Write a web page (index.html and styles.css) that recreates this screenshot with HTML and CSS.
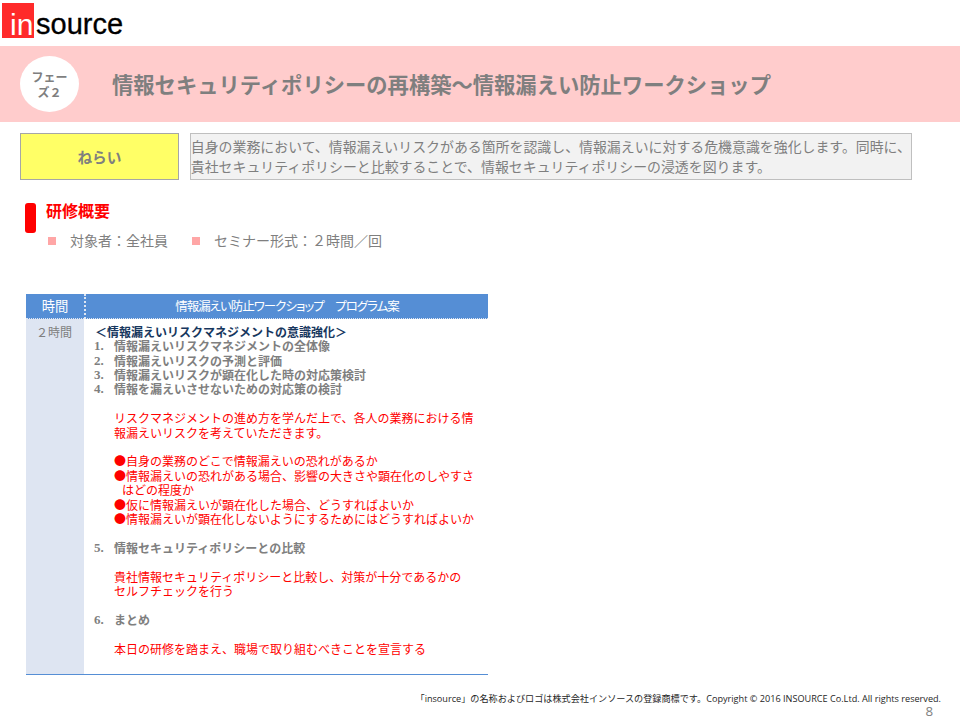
FILE: index.html
```html
<!DOCTYPE html>
<html lang="ja">
<head>
<meta charset="utf-8">
<title>情報セキュリティポリシーの再構築</title>
<link rel="stylesheet" href="styles.css">
</head>
<body>
<div class="page">
  <header class="logo-bar">
    <div class="logo"><span class="logo-in">in</span><span class="logo-source">source</span></div>
  </header>
  <section class="band">
    <div class="phase">フェー<br>ズ２</div>
    <h1 class="band-title">情報セキュリティポリシーの再構築～情報漏えい防止ワークショップ</h1>
  </section>
  <section class="aim">
    <div class="aim-label">ねらい</div>
    <p class="aim-text">自身の業務において、情報漏えいリスクがある箇所を認識し、情報漏えいに対する危機意識を強化します。同時に、<br>貴社セキュリティポリシーと比較することで、情報セキュリティポリシーの浸透を図ります。</p>
  </section>
  <section class="overview">
    <div class="overview-bar"></div>
    <div class="overview-body">
      <h2 class="overview-title">研修概要</h2>
      <div class="facts">
        <div class="fact"><span class="square"></span>対象者：全社員</div>
        <div class="fact"><span class="square"></span>セミナー形式：２時間／回</div>
      </div>
    </div>
  </section>
  <section class="program">
    <div class="head head-time">時間</div>
    <div class="head head-name">情報漏えい防止ワークショップ　プログラム案</div>
    <div class="cell-time">２時間</div>
    <div class="cell-body">
      <div class="lead">＜情報漏えいリスクマネジメントの意識強化＞</div>
      <div class="item"><span class="num">1.</span>情報漏えいリスクマネジメントの全体像</div>
      <div class="item"><span class="num">2.</span>情報漏えいリスクの予測と評価</div>
      <div class="item"><span class="num">3.</span>情報漏えいリスクが顕在化した時の対応策検討</div>
      <div class="item"><span class="num">4.</span>情報を漏えいさせないための対応策の検討</div>
      <p class="note gap">リスクマネジメントの進め方を学んだ上で、各人の業務における情報漏えいリスクを考えていただきます。</p>
      <ul class="points gap">
        <li>●自身の業務のどこで情報漏えいの恐れがあるか</li>
        <li>●情報漏えいの恐れがある場合、影響の大きさや顕在化のしやすさはどの程度か</li>
        <li>●仮に情報漏えいが顕在化した場合、どうすればよいか</li>
        <li>●情報漏えいが顕在化しないようにするためにはどうすればよいか</li>
      </ul>
      <div class="item gap"><span class="num">5.</span>情報セキュリティポリシーとの比較</div>
      <p class="note gap narrow">貴社情報セキュリティポリシーと比較し、対策が十分であるかのセルフチェックを行う</p>
      <div class="item gap"><span class="num">6.</span>まとめ</div>
      <p class="note gap">本日の研修を踏まえ、職場で取り組むべきことを宣言する</p>
    </div>
  </section>
  <footer class="foot">
    <div class="legal">「insource」の名称およびロゴは株式会社インソースの登録商標です。Copyright © 2016 INSOURCE Co.Ltd. All rights reserved.</div>
    <div class="page-no">8</div>
  </footer>
</div>
</body>
</html>
```
FILE: styles.css
```css
* { box-sizing: border-box; }
html, body { margin: 0; padding: 0; }
body { background: #fff; font-family: "Noto Sans CJK JP", "Noto Sans", sans-serif; color: #7f7f7f; }
h1, h2, p, ul { margin: 0; padding: 0; }
.page { width: 960px; height: 720px; overflow: hidden; }

.logo-bar { height: 46px; padding: 3px 0 0 2px; }
.logo { display: flex; align-items: flex-start; font-family: "Liberation Sans", sans-serif; font-size: 30px; line-height: 35px; }
.logo-in { width: 32px; height: 35px; padding: 4px 0 0 8px; background: #ff2a2a; color: #fff; }
.logo-source { padding-top: 4px; margin-left: 2px; color: #000; font-size: 29px; -webkit-text-stroke: 0.3px #000; }

.band { height: 76px; background: #ffcccc; display: flex; align-items: center; padding-left: 20px; }
.phase { width: 59px; height: 56px; border-radius: 50%; background: #fff; display: flex; align-items: center; justify-content: center; text-align: center; font-size: 12px; line-height: 15px; font-weight: 700; }
.band-title { margin-left: 33px; font-size: 21.3px; line-height: 28px; font-weight: 700; }

.aim { display: flex; margin: 11px 48px 0 20px; height: 47px; gap: 11px; }
.aim-label { width: 159px; padding-bottom: 1px; background: #ffff66; border: 1px solid #a6a6a6; display: flex; align-items: center; justify-content: center; font-size: 14.67px; font-weight: 700; }
.aim-text { flex: 1; background: #f2f2f2; border: 1px solid #bfbfbf; padding: 2px 0 0 0; font-size: 13.92px; line-height: 20px; white-space: nowrap; }

.overview { display: flex; margin: 23px 0 0 25px; gap: 10px; }
.overview-bar { width: 11px; height: 30px; background: #ff0000; border-radius: 3px; }
.overview-title { margin-top: -1px; font-size: 16px; line-height: 16px; font-weight: 700; color: #ff0000; }
.facts { display: flex; margin-top: 12px; font-size: 14px; line-height: 21px; gap: 22px; }
.fact { display: flex; align-items: center; }
.square { width: 8px; height: 8px; margin: 0 14px 0 2px; background: #ffa6a6; }

.program { display: grid; grid-template-columns: 58px 404px; grid-template-rows: 25px 356px; width: 462px; margin: 43px 0 0 26px; font-size: 12px; line-height: 14.4px; }
.head { background: #558ed5; color: #fff; font-size: 12.5px; line-height: 24px; text-align: center; border-bottom: 1px dotted #dfe6f2; }
.head-time { font-size: 13.3px; }
.head-name { border-left: 2px dotted #dfe6f2; font-feature-settings: "palt"; letter-spacing: -1px; }
.cell-time { background: #dee5f2; padding-top: 6px; text-align: center; padding-right: 2px; border-bottom: 1px solid #558ed5; }
.cell-body { padding: 5.7px 0 0 11px; border-bottom: 1px solid #558ed5; }
.lead { color: #17375e; font-weight: 700; }
.item { display: flex; font-weight: 700; }
.num { width: 20px; margin-left: -1px; font-family: "Liberation Serif", serif; font-size: 13px; }
.note { color: #ff0000; margin-left: 19px; width: 360px; }
.note.narrow { width: 350px; }
.points { list-style: none; color: #ff0000; margin-left: 19px; width: 360px; }
.points li { padding-left: 8px; text-indent: -8px; }
.gap { margin-top: 14.4px; }

.foot { margin-top: 18px; text-align: right; font-family: "Open Sans", "Noto Sans CJK JP", sans-serif; }
.legal { padding-right: 19px; font-size: 9.15px; line-height: 12px; color: #262626; white-space: nowrap; }
.page-no { padding-right: 27px; font-size: 13.3px; line-height: 12px; color: #7f7f7f; }
```
